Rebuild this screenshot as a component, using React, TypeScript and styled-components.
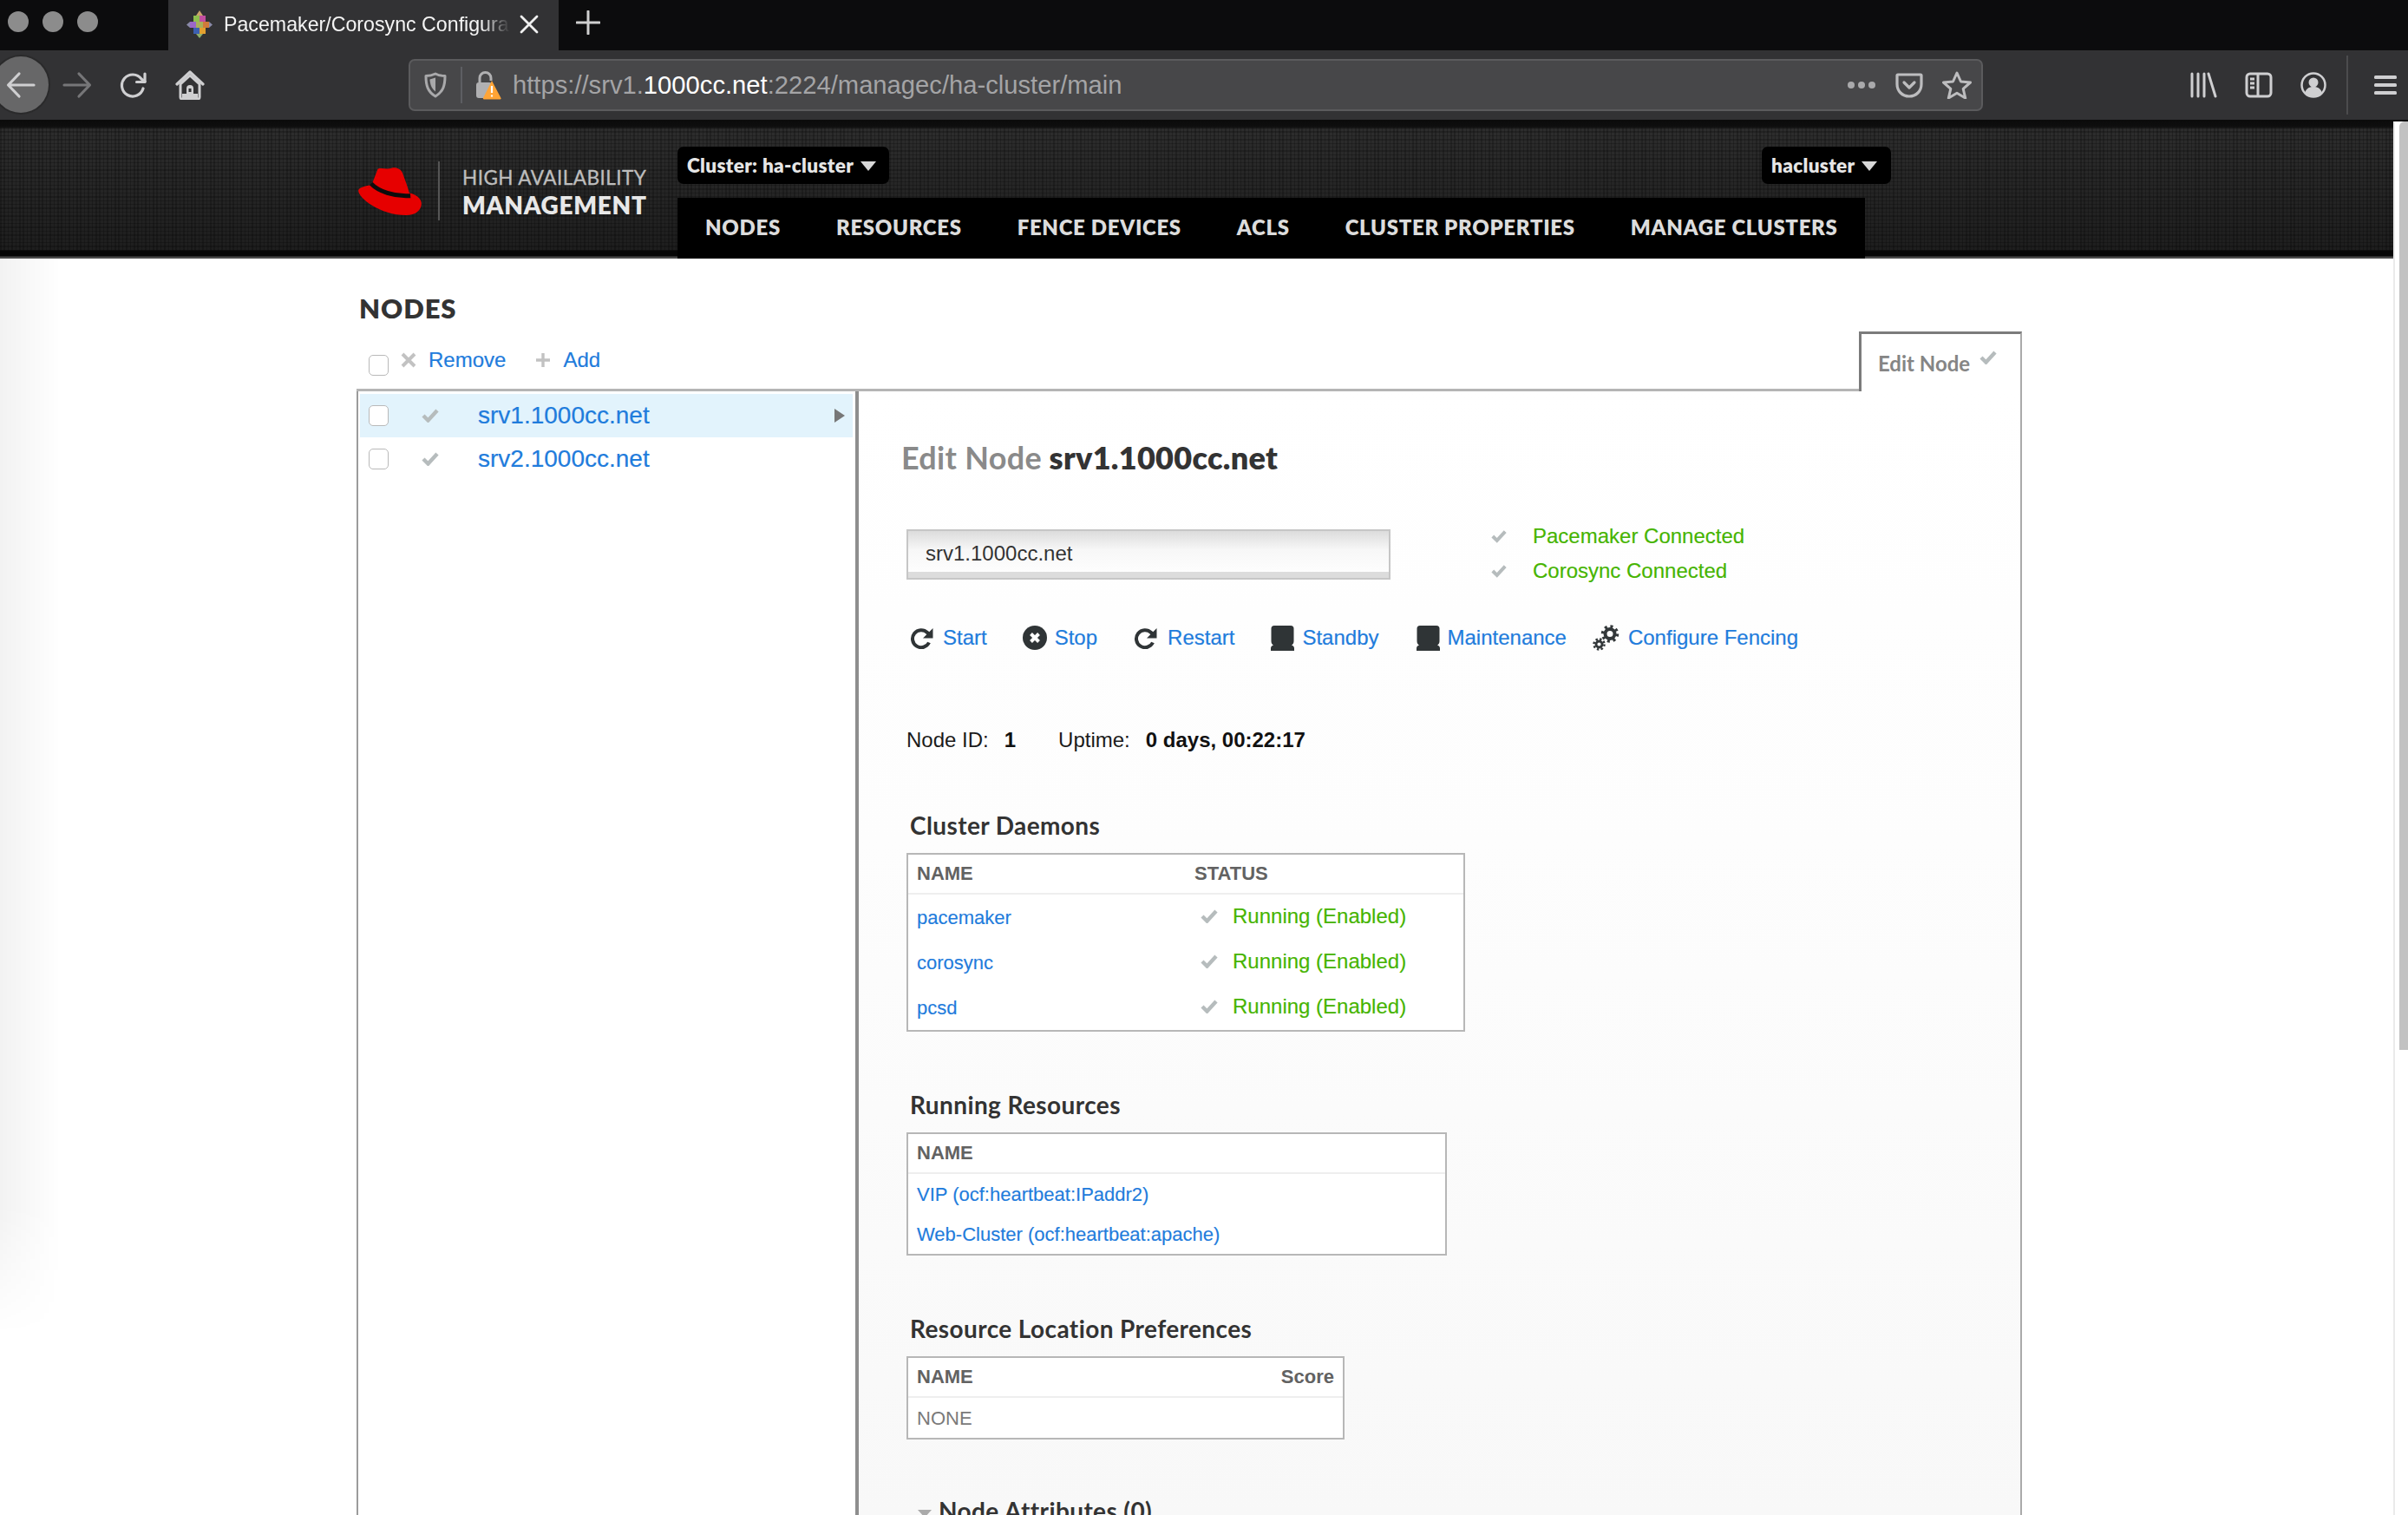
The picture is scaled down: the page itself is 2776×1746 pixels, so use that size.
import React from 'react';
import styled, { createGlobalStyle } from 'styled-components';

const Global = createGlobalStyle`
  html, body { margin: 0; padding: 0; background: #fff; overflow: hidden; }
  * { box-sizing: border-box; }
`;
const SANS = `"Liberation Sans", Arial, sans-serif`;
const HEAD = `Lato, "Open Sans", sans-serif`;
const BLUE = '#1f7cdc';
const GREEN = '#46b400';

const Page = styled.div`
  position: relative; width: 2776px; height: 1746px; overflow: hidden;
  display: flex; flex-direction: column; font-family: ${SANS}; background: #fff;
`;
const TabStrip = styled.div`
  height: 58px; background: #0c0c0d; display: flex; align-items: center; flex: none;
`;
const Lights = styled.div`
  width: 194px; display: flex; gap: 16px; padding-left: 9px; align-items: center; height: 100%; padding-bottom: 8px;
`;
const Light = styled.span`
  width: 24px; height: 24px; border-radius: 50%; background: #8c8c8c; display: block;
`;
const Tab = styled.div`
  width: 450px; height: 100%; background: #323234; display: flex; align-items: center;
  padding: 0 0 2px 20px; color: #f4f4f4;
`;
const TabTitle = styled.span`
  width: 330px; margin: 0 11px 0 12px; font: 23.2px ${SANS}; white-space: nowrap; overflow: hidden; flex: none;
  -webkit-mask-image: linear-gradient(to right, #000 90%, transparent 100%);
  mask-image: linear-gradient(to right, #000 90%, transparent 100%);
`;
const NewTab = styled.div` margin: 0 0 7px 20px; display: flex; `;
const Toolbar = styled.div`
  height: 80px; background: #323234; display: flex; align-items: center; flex: none; position: relative;
`;
const BackCircle = styled.div`
  position: absolute; left: -8px; top: 7px; width: 64px; height: 65px; border-radius: 50%;
  background: #676768; box-shadow: 0 0 0 2px #2a2a2b; display: flex; align-items: center; justify-content: center;
`;
const NavIcons = styled.div`
  display: flex; align-items: center; width: 471px; padding-left: 72px; gap: 32px; flex: none;
`;
const UrlBar = styled.div`
  width: 1815px; height: 60px; background: #474749; border: 2px solid #5b5b5d; border-radius: 7px;
  display: flex; align-items: center; padding-left: 16px; flex: none;
`;
const UrlDivider = styled.span` width: 2px; height: 42px; background: #5d5e63; margin: 0 15px 0 16px; `;
const UrlText = styled.div`
  margin-left: 13px; font: 29.2px ${SANS}; color: #a4a4a6; white-space: nowrap; flex: 1;
  b { font-weight: 400; color: #fff; }
`;
const UrlActions = styled.div` display: flex; align-items: center; gap: 22px; padding-right: 11px; `;
const ToolRight = styled.div`
  flex: 1; display: flex; align-items: center; padding-left: 238px; gap: 32px;
`;
const ToolSep = styled.span` width: 2px; height: 68px; background: #4c4c4e; margin-left: -9px; margin-right: -2px; `;
const Header = styled.div`
  height: 160px; flex: none; display: flex; position: relative; padding-left: 413px;
  background-image:
    linear-gradient(to bottom, #0b0b0b 0, #0e0e0e 8px, rgba(0,0,0,0) 11px, rgba(0,0,0,0) 150px, #060606 151px, #060606 157px, #4a4a4a 158px, #4a4a4a 160px),
    repeating-linear-gradient(0deg, rgba(0,0,0,.22) 0 1.5px, transparent 1.5px 4.4px),
    repeating-linear-gradient(90deg, rgba(0,0,0,.22) 0 1.5px, transparent 1.5px 4.4px),
    linear-gradient(to bottom, #2e2e2e, #1d1d1d);
`;
const Logo = styled.div`
  width: 368px; flex: none; display: flex; align-items: flex-start; padding-top: 48px;
`;
const HatBox = styled.span` display: flex; margin-top: 7px; `;
const LogoRule = styled.span` width: 2px; height: 68px; background: #555; margin: 0 26px 0 19px; `;
const LogoText = styled.div`
  display: flex; flex-direction: column; padding-top: 8px; font-family: ${HEAD}; line-height: 1; white-space: nowrap;
`;
const LogoTop = styled.span` font-size: 22.5px; color: #bdbdbd; font-weight: 400; letter-spacing: .45px; -webkit-text-stroke: .35px #bdbdbd; `;
const LogoBottom = styled.span` font-size: 28px; color: #e8e8e8; font-weight: 800; margin-top: 5px; letter-spacing: .7px; `;
const HeaderCenter = styled.div`
  display: flex; flex-direction: column; justify-content: flex-end; height: 100%;
`;
const Pill = styled.div`
  background: #000; color: #e6e6e6; height: 43px; border-radius: 7px; display: flex; align-items: center;
  font: 800 22.6px ${HEAD}; white-space: nowrap; padding: 0 11px; gap: 8px; letter-spacing: .3px;
`;
const ClusterPill = styled(Pill)` align-self: flex-start; margin-bottom: 16px; width: 244px; `;
const UserPill = styled(Pill)` position: absolute; left: 2031px; top: 31px; width: 149px; `;
const Caret = styled.span`
  width: 0; height: 0; border-left: 9px solid transparent; border-right: 9px solid transparent; border-top: 11px solid #d8d8d8;
  display: block; margin-top: 2px; flex: none;
`;
const Nav = styled.nav` display: flex; background: #000; height: 70px; width: 1369px; `;
const NavItem = styled.a`
  padding: 0 32px 3px; display: flex; align-items: center; color: #dcdcdc; font: 800 24px ${HEAD};
  white-space: nowrap; letter-spacing: .68px;
`;
const Main = styled.div`
  flex: 1; min-height: 0; padding-left: 411px; width: 2331px; display: flex; flex-direction: column;
`;
const PageTitle = styled.h1`
  margin: 37px 0 0 3px; font: 800 31px/40px ${HEAD}; color: #333; letter-spacing: .9px;
`;
const ActionsRow = styled.div`
  display: flex; align-items: flex-end; height: 75px; position: relative; margin-top: 1px;
`;
const ListTools = styled.div`
  display: flex; align-items: flex-end; flex: 1; height: 100%; border-bottom: 3px solid #b5b5b5; padding: 0 0 19px 14px;
  font-size: 24px;
`;
const Check = styled.span`
  width: 23px; height: 24px; border: 1.5px solid #b9b9b9; border-radius: 5px; background: #fff; display: block; flex: none;
`;
const ToolCheck = styled(Check)` margin-bottom: -4px; `;
const ToolLink = styled.a` color: ${BLUE}; font: 24px ${SANS}; margin-left: 14px; -webkit-text-stroke: .2px ${BLUE}; `;
const ToolGlyph = styled.span` display: flex; margin: 0 0 5px ${p => p.$l}px; `;
const EditTab = styled.div`
  width: 188px; height: 69px; border: 2px solid #aaa; border-top: 3px solid #7b7b7b; border-left: 3px solid #7b7b7b;
  border-bottom: none; background: #fff; display: flex; align-items: flex-start; padding: 19px 0 0 19px;
  color: #858585; font: 700 24px ${HEAD}; gap: 11px; position: relative;
  &::after { content: ''; position: absolute; left: 0; right: 0; bottom: -3px; height: 3px; background: #fff; }
`;
const Columns = styled.div`
  flex: 1; display: flex; min-height: 0; border-left: 2px solid #9b9b9b; border-right: 2px solid #aaa;
`;
const LeftCol = styled.div`
  width: 577px; flex: none; border-right: 4px solid #8e8e8e; padding: 3px 3px 0 2px; background: #fff;
`;
const Row = styled.div`
  height: 50px; display: flex; align-items: center; padding-left: 10px; position: relative;
  background: ${p => p.$on ? '#e2f3fc' : 'transparent'};
`;
const RowCheck = styled.span` margin-left: 38px; display: flex; `;
const RowLink = styled.a` color: ${BLUE}; font: 28px ${SANS}; margin-left: 45px; flex: 1; -webkit-text-stroke: .2px ${BLUE}; `;
const RowArrow = styled.span`
  width: 0; height: 0; border-left: 12px solid #777; border-top: 8.5px solid transparent; border-bottom: 8.5px solid transparent;
  margin-right: 9px;
`;
const RightCol = styled.div`
  flex: 1; min-width: 0; padding-left: 55px; background: linear-gradient(to bottom, #fff 0, #fdfdfd 40%, #f8f8f8 100%);
  overflow: hidden;
`;
const EditHeading = styled.h2`
  margin: 52px 0 0 -6px; font: 800 36px/48px ${HEAD}; color: #333; letter-spacing: .3px;
  span { color: #8a8a8a; font-weight: 700; }
`;
const InputRow = styled.div` display: flex; margin-top: 47px; height: 84px; `;
const NodeInput = styled.div`
  width: 558px; height: 58px; margin-top: 12px; border: 2.5px solid #c6c6c6; flex: none;
  background: linear-gradient(to bottom, #dcdcdc 0, #f7f7f7 40%, #fff 100%);
  display: flex; flex-direction: column;
  &::after { content: ''; height: 7px; background: #dcdcdc; flex: none; }
`;
const InputText = styled.div` font: 24px/24px ${SANS}; color: #333; padding: 14px 0 0 20px; flex: 1; `;
const Status = styled.div` margin-left: 116px; display: flex; flex-direction: column; gap: 16px; padding-top: 8px; `;
const StatusLine = styled.div` display: flex; align-items: center; color: ${GREEN}; font: 24px/24px ${SANS}; gap: 30px; -webkit-text-stroke: .15px ${GREEN}; `;
const Actions = styled.div` display: flex; align-items: center; height: 30px; margin: 38px 0 0 4px; `;
const Action = styled.a`
  display: flex; align-items: center; margin-right: ${p => p.$r}px; color: ${BLUE}; font: 24px/30px ${SANS};
  white-space: nowrap; gap: ${p => p.$g}px; -webkit-text-stroke: .2px ${BLUE};
`;
const Info = styled.div`
  display: flex; margin-top: 88px; font: 24px/30px ${SANS}; color: #1b1b1b; white-space: pre;
  b { color: #111; font-weight: 700; }
`;
const InfoLabel = styled.span` margin-right: ${p => p.$r}px; margin-left: ${p => p.$l || 0}px; `;
const SectionTitle = styled.h3`
  margin: ${p => p.$t}px 0 0 4px; font: 700 28px/36px ${HEAD}; color: #333; letter-spacing: .4px; white-space: nowrap;
`;
const Panel = styled.div`
  width: ${p => p.$w}px; margin-top: 14px; border: 2.5px solid #b7b7b7; background: #fff; padding: 0 10px;
`;
const TableHead = styled.div`
  height: 46px; margin: 0 -10px; padding: 0 10px; border-bottom: 2px solid #eee; display: flex; align-items: center;
  font: 700 22px ${SANS}; color: #626262;
`;
const NameCell = styled.span` width: ${p => p.$w}px; flex: ${p => p.$w ? 'none' : 1}; `;
const TableRow = styled.div`
  height: ${p => p.$h}px; display: flex; align-items: center; font: 22px ${SANS}; white-space: nowrap; padding-top: 1px;
  a { color: ${BLUE}; -webkit-text-stroke: .15px ${BLUE}; }
`;
const RunningCell = styled.span` display: flex; align-items: center; color: ${GREEN}; font-size: 24px; margin: -3px 0 0 7px; gap: 17px; -webkit-text-stroke: .15px ${GREEN}; `;
const NoneText = styled.span` color: #7a7a7a; `;
const Collapse = styled.div`
  display: flex; align-items: center; margin: 64px 0 0 13px; font: 700 28px/36px ${HEAD}; color: #333; gap: 8px; white-space: nowrap; letter-spacing: .4px;
`;
const CollapseCaret = styled.span`
  width: 0; height: 0; border-left: 8px solid transparent; border-right: 8px solid transparent; border-top: 9px solid #aaa; margin-top: 6px;
`;
const ScrollTrack = styled.div`
  position: absolute; top: 140px; right: 0; bottom: 0; width: 17px; background: #fff; border-left: 2px solid #eaeaea;
`;
const ScrollThumb = styled.div`
  margin-left: 5px; width: 10px; height: 1070px; border-radius: 6px 0 0 0; background: #c2c2c2;
`;
const EdgeShade = styled.div`
  position: absolute; left: 0; top: 298px; width: 70px; height: 1240px; pointer-events: none;
  background: linear-gradient(to right, rgba(0,0,0,.05), rgba(0,0,0,0));
  -webkit-mask-image: linear-gradient(to bottom, #000 88%, transparent 100%);
  mask-image: linear-gradient(to bottom, #000 88%, transparent 100%);
`;

const C = '#cfcfd1';
const Back = () => <svg width="34" height="32" viewBox="0 0 34 32" fill="none" stroke={C} strokeWidth="3.2" strokeLinecap="round" strokeLinejoin="round"><path d="M32 16H3M15 3 2.5 16 15 29" /></svg>;
const Fwd = () => <svg width="34" height="32" viewBox="0 0 34 32" fill="none" stroke="#767678" strokeWidth="3.2" strokeLinecap="round" strokeLinejoin="round"><path d="M2 16h29M19 3l12.5 13L19 29" /></svg>;
const Reload = () => <svg width="32" height="32" viewBox="0 0 32 32" fill="none" stroke={C} strokeWidth="3.2" strokeLinecap="round" strokeLinejoin="round"><path d="M27 20a12.5 12.5 0 1 1-2-11l4 3" /><path d="M29 3v9.5h-9.5" /></svg>;
const Home = () => <svg width="34" height="34" viewBox="0 0 34 34" fill="none"><path d="M2 16 17 2l15 14" stroke={C} strokeWidth="3.2" strokeLinecap="round" strokeLinejoin="round" /><path d="M6 16v15a2 2 0 0 0 2 2h18a2 2 0 0 0 2-2V16L17 6z" fill="none" stroke={C} strokeWidth="3" /><path d="M13 33V21a4 4 0 0 1 8 0v12z" fill={C} /><rect x="15.5" y="21" width="3" height="4" fill="#323234" /><path d="M8 27h18v5H8z" fill={C} /></svg>;
const Shield = () => <svg width="26" height="30" viewBox="0 0 26 30" fill="none"><path d="M13 2c4 2 7 2.5 11 2.5 0 11-2 18-11 23.5C4 22.5 2 15.5 2 4.5 6 4.5 9 4 13 2z" stroke="#a9a9ab" strokeWidth="3" strokeLinejoin="round" /><path d="M13 6.5v16c-4-3-6-7-6.5-14z" fill="#a9a9ab" /></svg>;
const Lock = () => <svg width="30" height="34" viewBox="0 0 30 34"><path d="M5 14V9a6.5 6.5 0 0 1 13 0v3" fill="none" stroke="#b0b0b2" strokeWidth="3" /><rect x="1" y="14" width="18" height="18" rx="3" fill="#b0b0b2" /><path d="M19 12 29.5 32a1 1 0 0 1-1 1.5H10a1 1 0 0 1-1-1.5z" fill="#ffa436" /><path d="M19 18v8M19 28.5v2" stroke="#fff" strokeWidth="2.2" /></svg>;
const Dots = () => <svg width="34" height="10" viewBox="0 0 34 10" fill="#a9a9ab"><circle cx="5" cy="5" r="4" /><circle cx="17" cy="5" r="4" /><circle cx="29" cy="5" r="4" /></svg>;
const Pocket = () => <svg width="32" height="30" viewBox="0 0 32 30" fill="none" stroke="#bdbdbf" strokeWidth="3.2" strokeLinecap="round" strokeLinejoin="round"><path d="M3 3h26a1 1 0 0 1 1 1v10c0 8-6 14-14 14S2 22 2 14V4a1 1 0 0 1 1-1z" /><path d="M10 12l6 6 6-6" /></svg>;
const Star = () => <svg width="34" height="32" viewBox="0 0 34 32" fill="none" stroke="#bdbdbf" strokeWidth="3" strokeLinejoin="round"><path d="M17 2l4.5 10 11 1-8.3 7.3L26.7 31 17 25.3 7.3 31l2.5-10.7L1.500 13l11-1z" /></svg>;
const Library = () => <svg width="32" height="30" viewBox="0 0 32 30" fill="none" stroke={C} strokeWidth="3" strokeLinecap="round"><path d="M3 2v26M10 2v26M17 2v26M22 2l8 26" /></svg>;
const Sidebar = () => <svg width="32" height="30" viewBox="0 0 32 30" fill="none"><rect x="2" y="2" width="28" height="26" rx="4" stroke={C} strokeWidth="3" /><path d="M15 2v26" stroke={C} strokeWidth="3" /><path d="M6 8h5M6 13h5M6 18h5" stroke={C} strokeWidth="3" /></svg>;
const Account = () => <svg width="30" height="30" viewBox="0 0 30 30" fill="none"><circle cx="15" cy="15" r="13.5" stroke={C} strokeWidth="2.5" /><circle cx="15" cy="12" r="5.5" fill={C} /><path d="M5 24c2-6 6-7 10-7s8 1 10 7c-3 3-6 4-10 4s-7-1-10-4z" fill={C} /></svg>;
const Burger = () => <svg width="26" height="24" viewBox="0 0 26 24" fill={C}><rect y="1" width="26" height="4" rx="1.5" /><rect y="10" width="26" height="4" rx="1.5" /><rect y="19" width="26" height="4" rx="1.5" /></svg>;
const Favicon = () => <svg width="32" height="32" viewBox="0 0 32 32"><path d="M16 0l4 6h-8z" fill="#c9a36b" /><rect x="9" y="6" width="7" height="7" fill="#8fbf4d" /><rect x="16" y="6" width="7" height="7" fill="#c24fa0" /><rect x="5" y="13" width="7" height="7" fill="#9a67c7" /><rect x="12" y="13" width="8" height="7" fill="#a9b05a" /><rect x="20" y="13" width="7" height="7" fill="#d07a3a" /><rect x="9" y="20" width="7" height="7" fill="#3c5fb0" /><rect x="16" y="20" width="7" height="7" fill="#e3a02f" /><path d="M16 32l-4-5h8z" fill="#8fae6a" /><path d="M5 13l-4 3.5L5 20zM27 13l4 3.5-4 3.5z" fill="#8a8aa8" /></svg>;
const CloseX = () => <svg width="22" height="22" viewBox="0 0 22 22" stroke="#f0f0f0" strokeWidth="2.8" strokeLinecap="round"><path d="M2 2l18 18M20 2 2 20" /></svg>;
const Plus = () => <svg width="28" height="28" viewBox="0 0 28 28" stroke="#cfcfcf" strokeWidth="3" strokeLinecap="round"><path d="M14 1v26M1 14h26" /></svg>;
const Hat = () => <svg width="73" height="55" viewBox="0 0 218 165"><path d="M44 60C20 65 0 70 0 80c0 25 75 85 165 85 32 0 53-17 53-40 0-14-13-28-34-35z" fill="#e60000" /><path d="M67 5c13-5 33 3 48-3 15-4 33 3 38 18 8 22 20 52 26 80L46 60z" fill="#e60000" /><path d="M44 56c24 26 80 46 136 42" fill="none" stroke="#0c0c0c" strokeWidth="15" /></svg>;
const Tick = ({ c = '#b6bcbd', w = 20, h = 16 }: { c?: string; w?: number; h?: number }) => <svg width={w} height={h} viewBox="0 0 20 16" fill="none" stroke={c} strokeWidth="4.4"><path d="M2 8l5.5 5.5L18 2" /></svg>;
const Ex = () => <svg width="18" height="18" viewBox="0 0 18 18" stroke="#c2c2c2" strokeWidth="4"><path d="M2 2l14 14M16 2 2 16" /></svg>;
const Cross = () => <svg width="18" height="18" viewBox="0 0 18 18" stroke="#c2c2c2" strokeWidth="3.4"><path d="M9 1v16M1 9h16" /></svg>;
const Rotate = () => <svg width="27" height="25" viewBox="0 0 27 25" fill="none"><path d="M22 17.5A10 10 0 1 1 20 6l2.5 2.5" stroke="#2f3436" strokeWidth="4" /><path d="M26.5 1v11.5H15z" fill="#2f3436" /></svg>;
const StopIcon = () => <svg width="28" height="28" viewBox="0 0 28 28"><circle cx="14" cy="14" r="14" fill="#2f3436" /><path d="M9.5 9.5l9 9M18.5 9.5l-9 9" stroke="#fff" strokeWidth="4" /></svg>;
const Server = () => <svg width="29" height="29" viewBox="0 0 29 29"><path d="M5 0h19a3.5 3.5 0 0 1 3.5 3.5V18c0 2-1 3.5-2.5 4.5 1.5.5 3 1.5 3 3.5v3H1v-3c0-2 1.5-3 3-3.5C2.5 21.5 1.5 20 1.5 18V3.5A3.5 3.5 0 0 1 5 0z" fill="#2f3436" /></svg>;
const Gears = () => <svg width="31" height="30" viewBox="0 0 31 30" fill="none"><g stroke="#33383a"><circle cx="20" cy="10.5" r="5.5" strokeWidth="4" /><circle cx="20" cy="10.5" r="8.5" strokeWidth="3.5" strokeDasharray="3 3.7" /><circle cx="7.5" cy="22.5" r="3.5" strokeWidth="2.8" /><circle cx="7.5" cy="22.5" r="6" strokeWidth="2.5" strokeDasharray="2.4 2.3" /></g></svg>;

const navItems = ['NODES', 'RESOURCES', 'FENCE DEVICES', 'ACLS', 'CLUSTER PROPERTIES', 'MANAGE CLUSTERS'];
const daemons = ['pacemaker', 'corosync', 'pcsd'];

export default function App() {
  return (
    <Page>
      <Global />
      <TabStrip>
        <Lights><Light /><Light /><Light /></Lights>
        <Tab>
          <Favicon />
          <TabTitle>Pacemaker/Corosync Configura</TabTitle>
          <CloseX />
        </Tab>
        <NewTab><Plus /></NewTab>
      </TabStrip>
      <Toolbar>
        <BackCircle><Back /></BackCircle>
        <NavIcons><Fwd /><Reload /><Home /></NavIcons>
        <UrlBar>
          <Shield />
          <UrlDivider />
          <Lock />
          <UrlText>https://srv1.<b>1000cc.net</b>:2224/managec/ha-cluster/main</UrlText>
          <UrlActions><Dots /><Pocket /><Star /></UrlActions>
        </UrlBar>
        <ToolRight><Library /><Sidebar /><Account /><ToolSep /><Burger /></ToolRight>
      </Toolbar>
      <Header>
        <Logo>
          <HatBox><Hat /></HatBox>
          <LogoRule />
          <LogoText>
            <LogoTop>HIGH AVAILABILITY</LogoTop>
            <LogoBottom>MANAGEMENT</LogoBottom>
          </LogoText>
        </Logo>
        <HeaderCenter>
          <ClusterPill>Cluster: ha-cluster <Caret /></ClusterPill>
          <Nav>{navItems.map(n => <NavItem key={n}>{n}</NavItem>)}</Nav>
        </HeaderCenter>
        <UserPill>hacluster <Caret /></UserPill>
      </Header>
      <Main>
        <PageTitle>NODES</PageTitle>
        <ActionsRow>
          <ListTools>
            <ToolCheck />
            <ToolGlyph $l={14}><Ex /></ToolGlyph>
            <ToolLink>Remove</ToolLink>
            <ToolGlyph $l={34}><Cross /></ToolGlyph>
            <ToolLink>Add</ToolLink>
          </ListTools>
          <EditTab>Edit Node <Tick /></EditTab>
        </ActionsRow>
        <Columns>
          <LeftCol>
            <Row $on><Check /><RowCheck><Tick /></RowCheck><RowLink>srv1.1000cc.net</RowLink><RowArrow /></Row>
            <Row><Check /><RowCheck><Tick /></RowCheck><RowLink>srv2.1000cc.net</RowLink></Row>
          </LeftCol>
          <RightCol>
            <EditHeading><span>Edit Node</span> srv1.1000cc.net</EditHeading>
            <InputRow>
              <NodeInput><InputText>srv1.1000cc.net</InputText></NodeInput>
              <Status>
                <StatusLine><Tick w={18} h={18} />Pacemaker Connected</StatusLine>
                <StatusLine><Tick w={18} h={18} />Corosync Connected</StatusLine>
              </Status>
            </InputRow>
            <Actions>
              <Action $g={11} $r={41}><Rotate />Start</Action>
              <Action $g={9} $r={42}><StopIcon />Stop</Action>
              <Action $g={12} $r={41}><Rotate />Restart</Action>
              <Action $g={8} $r={42}><Server />Standby</Action>
              <Action $g={8} $r={30}><Server />Maintenance</Action>
              <Action $g={10} $r={0}><Gears />Configure Fencing</Action>
            </Actions>
            <Info>
              <InfoLabel $r={18}>Node ID:</InfoLabel>
              <b>1</b>
              <InfoLabel $r={18} $l={49}>Uptime:</InfoLabel>
              <b>0 days, 00:22:17</b>
            </Info>
            <SectionTitle $t={65}>Cluster Daemons</SectionTitle>
            <Panel $w={644}>
              <TableHead><NameCell $w={320}>NAME</NameCell><span>STATUS</span></TableHead>
              {daemons.map(d => (
                <TableRow key={d} $h={52}>
                  <NameCell $w={320}><a>{d}</a></NameCell>
                  <RunningCell><Tick />Running (Enabled)</RunningCell>
                </TableRow>
              ))}
            </Panel>
            <SectionTitle $t={66}>Running Resources</SectionTitle>
            <Panel $w={623}>
              <TableHead><NameCell>NAME</NameCell></TableHead>
              <TableRow $h={46}><a>VIP (ocf:heartbeat:IPaddr2)</a></TableRow>
              <TableRow $h={46}><a>Web-Cluster (ocf:heartbeat:apache)</a></TableRow>
            </Panel>
            <SectionTitle $t={66}>Resource Location Preferences</SectionTitle>
            <Panel $w={505}>
              <TableHead><NameCell>NAME</NameCell><span>Score</span></TableHead>
              <TableRow $h={46}><NoneText>NONE</NoneText></TableRow>
            </Panel>
            <Collapse><CollapseCaret />Node Attributes (0)</Collapse>
          </RightCol>
        </Columns>
      </Main>
      <EdgeShade />
      <ScrollTrack><ScrollThumb /></ScrollTrack>
    </Page>
  );
}
